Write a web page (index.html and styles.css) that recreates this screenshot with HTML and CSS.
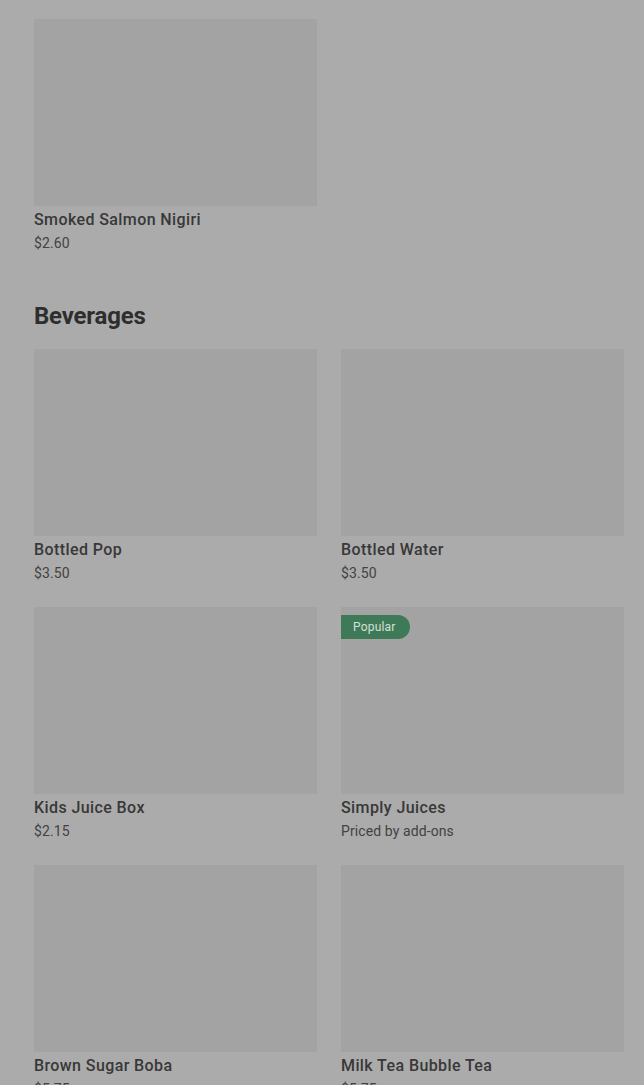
FILE: index.html
```html
<!DOCTYPE html>
<html>
<head>
<meta charset="utf-8">
<link rel="stylesheet" href="styles.css">
</head>
<body>
<main class="menu">
  <section class="section first">
    <div class="grid">
      <div class="card">
        <div class="thumb"></div>
        <div class="name">Smoked Salmon Nigiri</div>
        <div class="price">$2.60</div>
      </div>
    </div>
  </section>
  <section class="section">
    <h2 class="section-title">Beverages</h2>
    <div class="grid">
      <div class="card">
        <div class="thumb"></div>
        <div class="name">Bottled Pop</div>
        <div class="price">$3.50</div>
      </div>
      <div class="card">
        <div class="thumb"></div>
        <div class="name">Bottled Water</div>
        <div class="price">$3.50</div>
      </div>
      <div class="card">
        <div class="thumb"></div>
        <div class="name">Kids Juice Box</div>
        <div class="price">$2.15</div>
      </div>
      <div class="card">
        <div class="thumb"><span class="badge">Popular</span></div>
        <div class="name">Simply Juices</div>
        <div class="price">Priced by add-ons</div>
      </div>
      <div class="card">
        <div class="thumb"></div>
        <div class="name">Brown Sugar Boba</div>
        <div class="price">$5.75</div>
      </div>
      <div class="card">
        <div class="thumb"></div>
        <div class="name">Milk Tea Bubble Tea</div>
        <div class="price">$5.75</div>
      </div>
    </div>
  </section>
</main>
</body>
</html>
```
FILE: styles.css
```css
html, body {
  margin: 0;
  padding: 0;
  background: #ababab;
  overflow: hidden;
}
body {
  font-family: Roboto, "Liberation Sans", sans-serif;
  color: #333;
}
.menu {
  padding: 19px 20px 0 34px;
}
.section.first {
  margin-bottom: 50px;
}
.section-title {
  margin: 0 0 19px 0;
  font-size: 24px;
  line-height: 28px;
  font-weight: 700;
  letter-spacing: -0.2px;
  color: #2e2e2e;
}
.grid {
  display: grid;
  grid-template-columns: 283px 283px;
  column-gap: 24px;
  row-gap: 25px;
}
.card {
  display: flex;
  flex-direction: column;
}
.thumb {
  position: relative;
  height: 187px;
  background: #a3a3a3;
}
.badge {
  position: absolute;
  left: 0;
  top: 8px;
  height: 24px;
  line-height: 24px;
  padding: 0 14px 0 12px;
  background: #3f7a58;
  color: #d3e0d7;
  font-size: 12px;
  letter-spacing: 0.2px;
  border-radius: 0 12px 12px 0;
}
.name {
  margin-top: 4px;
  font-size: 16px;
  line-height: 20px;
  font-weight: 500;
  letter-spacing: 0.4px;
  color: #383838;
}
.price {
  margin-top: 4px;
  font-size: 14px;
  line-height: 18px;
  letter-spacing: 0.1px;
  color: #424242;
}
```
